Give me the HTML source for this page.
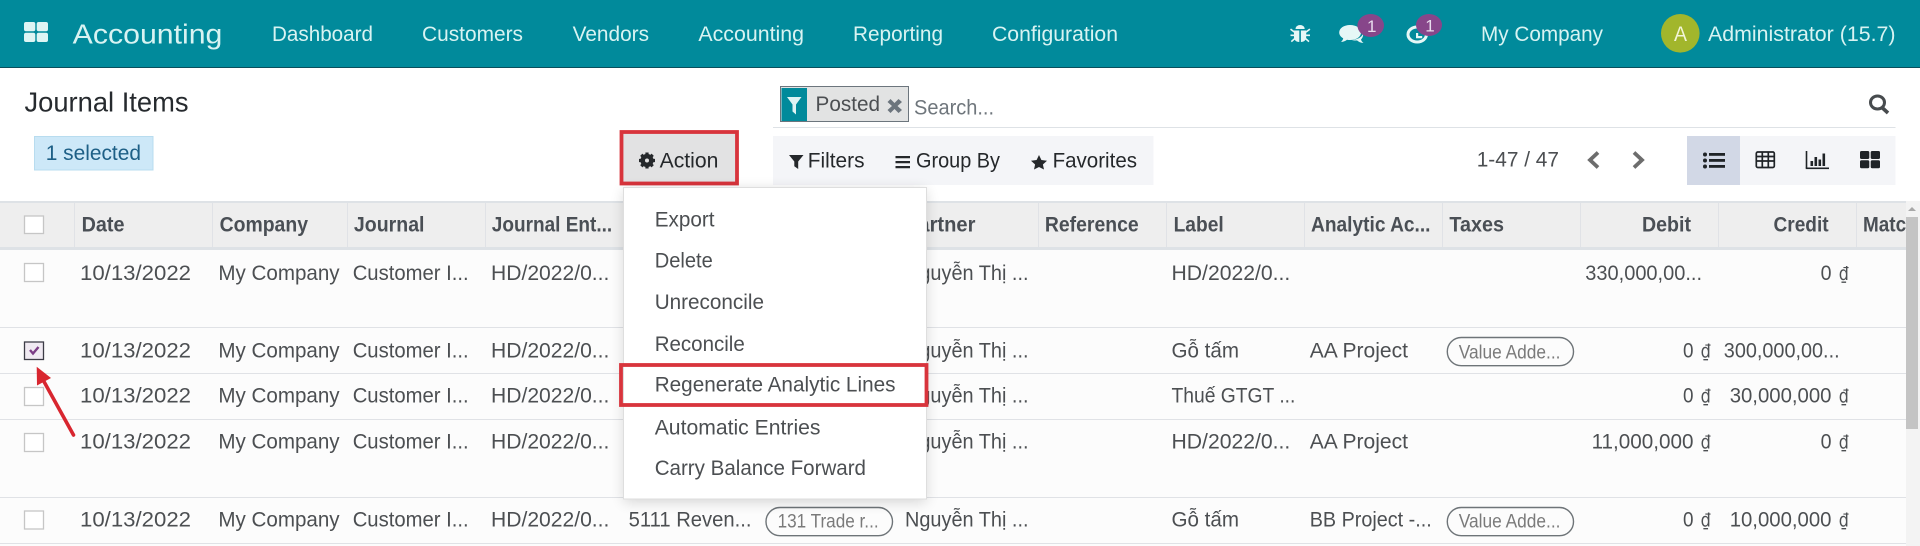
<!DOCTYPE html>
<html lang="en">
<head>
<meta charset="utf-8">
<title>Journal Items</title>
<style>
html,body{margin:0;padding:0;width:1920px;height:546px;overflow:hidden;background:#fff}
svg{display:block}
text{font-family:"Liberation Sans","Noto Sans CJK SC",sans-serif;white-space:pre}
.nav{font-size:21.5px;fill:#d8f3f2}
.hd{font-size:21.5px;font-weight:700;fill:#4a4f55}
.td{font-size:21.5px;fill:#4c4f52}
.bt{font-size:21.5px;fill:#25282b}
.mi{font-size:21.5px;fill:#4c4f52}
.pill{font-size:19.5px;fill:#7a7a7a}
.cb{fill:#fff;stroke:#c6c6c6;stroke-width:1.3}
.sep{fill:#e0e2e6}
text.cur{font-family:"DejaVu Sans",sans-serif;font-size:19px;fill:#4c4f52}
.pl{fill:none;stroke:#6e7478;stroke-width:1.4}
</style>
</head>
<body>
<svg xmlns="http://www.w3.org/2000/svg" width="1920" height="546" viewBox="0 0 1920 546">
<defs>
<filter id="sh" x="-10%" y="-10%" width="120%" height="120%"><feGaussianBlur stdDeviation="7"/></filter>
<clipPath id="tb"><rect x="0" y="201" width="1906" height="345"/></clipPath>
</defs>

<!-- navbar -->
<rect x="0" y="0" width="1920" height="67" fill="#018a9b"/>
<rect x="0" y="67" width="1920" height="1" fill="#0a4f5c"/>
<g fill="#def5f4">
<rect x="24" y="22" width="11.300" height="9.300" rx="2"/><rect x="36.700" y="22" width="11.300" height="9.300" rx="2"/>
<rect x="24" y="32.700" width="11.300" height="9.300" rx="2"/><rect x="36.700" y="32.700" width="11.300" height="9.300" rx="2"/>
</g>
<text x="72.7" y="43.3" font-size="28" fill="#d8f3f2" textLength="149.7" lengthAdjust="spacingAndGlyphs">Accounting</text>
<text class="nav" x="272" y="41" textLength="101" lengthAdjust="spacingAndGlyphs">Dashboard</text>
<text class="nav" x="422" y="41" textLength="101" lengthAdjust="spacingAndGlyphs">Customers</text>
<text class="nav" x="572.6" y="41" textLength="76.4" lengthAdjust="spacingAndGlyphs">Vendors</text>
<text class="nav" x="698.4" y="41" textLength="105.6" lengthAdjust="spacingAndGlyphs">Accounting</text>
<text class="nav" x="853" y="41" textLength="90" lengthAdjust="spacingAndGlyphs">Reporting</text>
<text class="nav" x="992" y="41" textLength="126" lengthAdjust="spacingAndGlyphs">Configuration</text>

<!-- bug -->
<g fill="#e6f7f6">
<path d="M1295.5 29a4.6 4 0 0 1 9.2 0z"/>
<path d="M1294 30.5h5.3V42c-3.2 0-5.3-2-5.3-5zM1300.9 30.5h5.3V37c0 3-2.100 5-5.300 5z"/>
<path d="M1291 28.500l4 3-1 1.200-4-3zM1309.400 28.500l-4 3 1 1.200 4-3zM1290.500 34.500h5v1.600h-5zM1305 34.500h5v1.600h-5zM1290.800 41l4-3.500 1 1.200-4 3.500zM1309.500 41l-4-3.500-1 1.200 4 3.500z"/>
</g>
<!-- chat -->
<path d="M1350 25c6.500 0 11 3.300 11 7.500s-4.500 7.500-11 7.500c-1 0-2 0-3-.3-1.500 1.300-3.500 2-6 2.300 1.200-1 2-2.300 2.200-3.700-2.500-1.400-4-3.500-4-5.800 0-4.200 4.700-7.500 10.800-7.500z" fill="#e6f7f6"/>
<path d="M1363 33.500c.700 3-1.500 5.500-2 6 .300 1.200 1 2.200 2.500 3.500-2.500-.2-5-1-6.500-2.600-1.200.2-3.500.2-5-.4 5-.5 10-2.500 11-6.500z" fill="#e6f7f6"/>
<ellipse cx="1370.700" cy="25.500" rx="13.300" ry="11.500" fill="#87468a"/>
<text x="1367" y="32" font-size="17" fill="#e8dced">1</text>
<!-- activity clock -->
<ellipse cx="1417.200" cy="34.500" rx="9.200" ry="7.500" fill="none" stroke="#e6f7f6" stroke-width="3"/>
<path d="M1416 33h2.200v3h4v2.200h-6.200z" fill="#e6f7f6"/>
<ellipse cx="1429" cy="25" rx="13" ry="11" fill="#87468a"/>
<text x="1425.300" y="31.500" font-size="17" fill="#e8dced">1</text>

<text class="nav" x="1481" y="41" textLength="122" lengthAdjust="spacingAndGlyphs">My Company</text>
<ellipse cx="1680.300" cy="33.300" rx="19.300" ry="19.300" fill="#a2b62c"/>
<text x="1674" y="41" font-size="21.500" fill="#f3f5d8" textLength="13" lengthAdjust="spacingAndGlyphs">A</text>
<text class="nav" x="1708" y="41" textLength="187.500" lengthAdjust="spacingAndGlyphs">Administrator (15.7)</text>

<!-- control panel -->
<text x="24.500" y="111.700" font-size="28" fill="#262a2e" textLength="164" lengthAdjust="spacingAndGlyphs">Journal Items</text>
<rect x="34.500" y="136.500" width="118.500" height="33.500" fill="#cde8f8" stroke="#b8dcef"/>
<text x="45.700" y="160" font-size="21" fill="#1d5f86" textLength="95.300" lengthAdjust="spacingAndGlyphs">1 selected</text>

<!-- search -->
<rect x="773" y="127" width="1122.500" height="1" fill="#dee2e6"/>
<rect x="780.500" y="86.500" width="128" height="35" fill="#e2e3e3" stroke="#6c757d"/>
<rect x="781.500" y="88" width="25.500" height="33" fill="#018a9b"/>
<path d="M787 97h14.500l-5.500 7.500v10l-3.500-3v-7z" fill="#dff3f4"/>
<text x="815.500" y="111" font-size="21.500" fill="#4c4f52" textLength="64.500" lengthAdjust="spacingAndGlyphs">Posted</text>
<path d="M887.500 102l3-3 4 4 4-4 3.500 3-4.500 4 4.500 4-3.500 3-4-4-4 4-3-3 4.500-4z" fill="#6c757d"/>
<text x="914" y="114.300" font-size="21.500" fill="#6f767c" textLength="80" lengthAdjust="spacingAndGlyphs">Search...</text>
<ellipse cx="1877.500" cy="102.500" rx="7" ry="6.500" fill="none" stroke="#474b4e" stroke-width="3"/>
<path d="M1882 107.500l6 5.500" stroke="#474b4e" stroke-width="3.600" fill="none"/>

<!-- filter bar -->
<rect x="773" y="136" width="380.500" height="49" fill="#f4f5f8"/>
<path d="M789 155h14.500l-5.300 6.500v7.500l-3.900-2.800v-4.700z" fill="#25282b"/>
<text class="bt" x="807.800" y="167.700" textLength="56.700" lengthAdjust="spacingAndGlyphs">Filters</text>
<path d="M895.500 156h14.500v2.300h-14.500zM895.500 161h14.500v2.300h-14.500zM895.500 166h14.500v2.300h-14.500z" fill="#25282b"/>
<text class="bt" x="916" y="167.700" textLength="84" lengthAdjust="spacingAndGlyphs">Group By</text>
<path d="M1039 155l2.400 5 5.600.7-4.100 3.800 1.100 5-5-2.500-5 2.500 1.100-5-4.100-3.800 5.600-.7z" fill="#25282b"/>
<text class="bt" x="1052.600" y="167.700" textLength="84.400" lengthAdjust="spacingAndGlyphs">Favorites</text>

<!-- pager -->
<text x="1476.700" y="166.700" font-size="21.500" fill="#4c4f52" textLength="82.300" lengthAdjust="spacingAndGlyphs">1-47 / 47</text>
<path d="M1598 152.500l-8 7.500 8 7.500" fill="none" stroke="#6d6d6d" stroke-width="3.800"/>
<path d="M1634 152.500l8 7.500-8 7.500" fill="none" stroke="#6d6d6d" stroke-width="3.800"/>

<!-- view switcher -->
<rect x="1687" y="136" width="208.500" height="49" fill="#f4f5f8"/>
<rect x="1687" y="136" width="53" height="49" fill="#d2d8e6"/>
<g fill="#1f2327">
<circle cx="1705" cy="154.500" r="2"/><circle cx="1705" cy="160.500" r="2"/><circle cx="1705" cy="166.500" r="2"/>
<rect x="1709" y="153" width="16" height="2.800"/><rect x="1709" y="159" width="16" height="2.800"/><rect x="1709" y="165" width="16" height="2.800"/>
</g>
<g fill="none" stroke="#1f2327" stroke-width="1.700">
<rect x="1756.300" y="152" width="18" height="15.500" rx="1.500"/>
<path d="M1756.300 156.500h18M1756.300 161h18M1762.300 152v15.500M1768.300 152v15.500"/>
</g>
<g fill="#1f2327">
<rect x="1805.700" y="151" width="1.600" height="17"/><rect x="1805.700" y="167.500" width="23.300" height="1.600"/>
<rect x="1810.500" y="161" width="2.600" height="5"/><rect x="1814.500" y="157" width="2.600" height="9"/><rect x="1818.500" y="159.500" width="2.600" height="6.500"/><rect x="1822.500" y="153.500" width="2.600" height="12.500"/>
<rect x="1860" y="151" width="9.300" height="8" rx="1.500"/><rect x="1870.700" y="151" width="9.300" height="8" rx="1.500"/>
<rect x="1860" y="160.300" width="9.300" height="8" rx="1.500"/><rect x="1870.700" y="160.300" width="9.300" height="8" rx="1.500"/>
</g>

<!-- table -->
<g clip-path="url(#tb)">
<rect x="0" y="250" width="1906" height="296" fill="#fcfcfc"/>
<rect x="0" y="201" width="1906" height="2" fill="#dee2e6"/>
<rect x="0" y="203" width="1906" height="44" fill="#eeeeee"/>
<rect x="0" y="247" width="1906" height="3" fill="#dee2e6"/>
<g class="sep">
<rect x="74" y="203" width="1" height="44"/><rect x="212" y="203" width="1" height="44"/><rect x="347" y="203" width="1" height="44"/><rect x="485" y="203" width="1" height="44"/><rect x="1038" y="203" width="1" height="44"/><rect x="1166" y="203" width="1" height="44"/><rect x="1304" y="203" width="1" height="44"/><rect x="1442" y="203" width="1" height="44"/><rect x="1580" y="203" width="1" height="44"/><rect x="1718" y="203" width="1" height="44"/><rect x="1856" y="203" width="1" height="44"/>
<rect x="0" y="327" width="1906" height="1"/><rect x="0" y="373" width="1906" height="1"/><rect x="0" y="419" width="1906" height="1"/><rect x="0" y="497" width="1906" height="1"/><rect x="0" y="543" width="1906" height="1"/>
</g>

<rect class="cb" x="24.500" y="216" width="19" height="17.500"/>
<text class="hd" x="81.600" y="231.700" textLength="42.900" lengthAdjust="spacingAndGlyphs">Date</text>
<text class="hd" x="219.600" y="231.700" textLength="88.400" lengthAdjust="spacingAndGlyphs">Company</text>
<text class="hd" x="353.900" y="231.700" textLength="70.600" lengthAdjust="spacingAndGlyphs">Journal</text>
<text class="hd" x="491.800" y="231.700" textLength="120.400" lengthAdjust="spacingAndGlyphs">Journal Ent...</text>
<text class="hd" x="905" y="231.700" textLength="70.400" lengthAdjust="spacingAndGlyphs">Partner</text>
<text class="hd" x="1044.900" y="231.700" textLength="93.800" lengthAdjust="spacingAndGlyphs">Reference</text>
<text class="hd" x="1173.600" y="231.700" textLength="50.100" lengthAdjust="spacingAndGlyphs">Label</text>
<text class="hd" x="1311" y="231.700" textLength="119.500" lengthAdjust="spacingAndGlyphs">Analytic Ac...</text>
<text class="hd" x="1449.400" y="231.700" textLength="54.600" lengthAdjust="spacingAndGlyphs">Taxes</text>
<text class="hd" x="1642" y="231.700" textLength="49" lengthAdjust="spacingAndGlyphs">Debit</text>
<text class="hd" x="1773.500" y="231.700" textLength="55.100" lengthAdjust="spacingAndGlyphs">Credit</text>
<text class="hd" x="1863" y="231.700" textLength="83" lengthAdjust="spacingAndGlyphs">Matching</text>

<!-- row 1 -->
<rect class="cb" x="24.500" y="263.500" width="19" height="18"/>
<text class="td" x="80" y="280" textLength="111" lengthAdjust="spacingAndGlyphs">10/13/2022</text>
<text class="td" x="218.400" y="280" textLength="121.200" lengthAdjust="spacingAndGlyphs">My Company</text>
<text class="td" x="352.700" y="280" textLength="115.900" lengthAdjust="spacingAndGlyphs">Customer I...</text>
<text class="td" x="491" y="280" textLength="118.400" lengthAdjust="spacingAndGlyphs">HD/2022/0...</text>
<text class="td" x="905" y="280" textLength="123.500" lengthAdjust="spacingAndGlyphs">Nguyễn Thị ...</text>
<text class="td" x="1171.500" y="280" textLength="118.800" lengthAdjust="spacingAndGlyphs">HD/2022/0...</text>
<text class="td" x="1585.300" y="280" textLength="116.700" lengthAdjust="spacingAndGlyphs">330,000,00...</text>
<text class="td" x="1820.600" y="280" textLength="10.900" lengthAdjust="spacingAndGlyphs">0</text>
<text class="cur" x="1838.700" y="280" textLength="10.100" lengthAdjust="spacingAndGlyphs">₫</text>

<!-- row 2 -->
<rect x="24.500" y="342" width="19" height="17.500" fill="#f0eaf2" stroke="#3c3c46" stroke-width="1.300"/>
<path d="M30 350l3 3.500 5.500-6.500" fill="none" stroke="#7c3d86" stroke-width="2.400"/>
<text class="td" x="80" y="357.700" textLength="111" lengthAdjust="spacingAndGlyphs">10/13/2022</text>
<text class="td" x="218.400" y="357.700" textLength="121.200" lengthAdjust="spacingAndGlyphs">My Company</text>
<text class="td" x="352.700" y="357.700" textLength="115.900" lengthAdjust="spacingAndGlyphs">Customer I...</text>
<text class="td" x="491" y="357.700" textLength="118.400" lengthAdjust="spacingAndGlyphs">HD/2022/0...</text>
<text class="td" x="905" y="357.700" textLength="123.500" lengthAdjust="spacingAndGlyphs">Nguyễn Thị ...</text>
<text class="td" x="1171.500" y="357.700" textLength="67.500" lengthAdjust="spacingAndGlyphs">Gỗ tấm</text>
<text class="td" x="1309.700" y="357.700" textLength="98.300" lengthAdjust="spacingAndGlyphs">AA Project</text>
<rect class="pl" x="1447.300" y="337.500" width="126.200" height="28.200" rx="14"/>
<text class="pill" x="1458.700" y="358.500" textLength="101.800" lengthAdjust="spacingAndGlyphs">Value Adde...</text>
<text class="td" x="1683" y="357.700" textLength="10.500" lengthAdjust="spacingAndGlyphs">0</text>
<text class="cur" x="1700.600" y="357.700" textLength="10.200" lengthAdjust="spacingAndGlyphs">₫</text>
<text class="td" x="1723.800" y="357.700" textLength="115.800" lengthAdjust="spacingAndGlyphs">300,000,00...</text>

<!-- row 3 -->
<rect class="cb" x="24.500" y="387.500" width="19" height="18"/>
<text class="td" x="80" y="402.700" textLength="111" lengthAdjust="spacingAndGlyphs">10/13/2022</text>
<text class="td" x="218.400" y="402.700" textLength="121.200" lengthAdjust="spacingAndGlyphs">My Company</text>
<text class="td" x="352.700" y="402.700" textLength="115.900" lengthAdjust="spacingAndGlyphs">Customer I...</text>
<text class="td" x="491" y="402.700" textLength="118.400" lengthAdjust="spacingAndGlyphs">HD/2022/0...</text>
<text class="td" x="905" y="402.700" textLength="123.500" lengthAdjust="spacingAndGlyphs">Nguyễn Thị ...</text>
<text class="td" x="1171.500" y="402.700" textLength="123.900" lengthAdjust="spacingAndGlyphs">Thuế GTGT ...</text>
<text class="td" x="1683" y="402.700" textLength="10.500" lengthAdjust="spacingAndGlyphs">0</text>
<text class="cur" x="1700.600" y="402.700" textLength="10.200" lengthAdjust="spacingAndGlyphs">₫</text>
<text class="td" x="1729.700" y="402.700" textLength="101.800" lengthAdjust="spacingAndGlyphs">30,000,000</text>
<text class="cur" x="1838.700" y="402.700" textLength="10.100" lengthAdjust="spacingAndGlyphs">₫</text>

<!-- row 4 -->
<rect class="cb" x="24.500" y="433.500" width="19" height="18"/>
<text class="td" x="80" y="448.300" textLength="111" lengthAdjust="spacingAndGlyphs">10/13/2022</text>
<text class="td" x="218.400" y="448.300" textLength="121.200" lengthAdjust="spacingAndGlyphs">My Company</text>
<text class="td" x="352.700" y="448.300" textLength="115.900" lengthAdjust="spacingAndGlyphs">Customer I...</text>
<text class="td" x="491" y="448.300" textLength="118.400" lengthAdjust="spacingAndGlyphs">HD/2022/0...</text>
<text class="td" x="905" y="448.300" textLength="123.500" lengthAdjust="spacingAndGlyphs">Nguyễn Thị ...</text>
<text class="td" x="1171.500" y="448.300" textLength="118.800" lengthAdjust="spacingAndGlyphs">HD/2022/0...</text>
<text class="td" x="1309.700" y="448.300" textLength="98.300" lengthAdjust="spacingAndGlyphs">AA Project</text>
<text class="td" x="1591.600" y="448.300" textLength="101.900" lengthAdjust="spacingAndGlyphs">11,000,000</text>
<text class="cur" x="1700.600" y="448.300" textLength="10.200" lengthAdjust="spacingAndGlyphs">₫</text>
<text class="td" x="1820.600" y="448.300" textLength="10.900" lengthAdjust="spacingAndGlyphs">0</text>
<text class="cur" x="1838.700" y="448.300" textLength="10.100" lengthAdjust="spacingAndGlyphs">₫</text>

<!-- row 5 -->
<rect class="cb" x="24.500" y="511" width="19" height="18"/>
<text class="td" x="80" y="526.700" textLength="111" lengthAdjust="spacingAndGlyphs">10/13/2022</text>
<text class="td" x="218.400" y="526.700" textLength="121.200" lengthAdjust="spacingAndGlyphs">My Company</text>
<text class="td" x="352.700" y="526.700" textLength="115.900" lengthAdjust="spacingAndGlyphs">Customer I...</text>
<text class="td" x="491" y="526.700" textLength="118.400" lengthAdjust="spacingAndGlyphs">HD/2022/0...</text>
<text class="td" x="628.600" y="526.700" textLength="122.900" lengthAdjust="spacingAndGlyphs">5111 Reven...</text>
<rect class="pl" x="766" y="507.500" width="126.500" height="28.200" rx="14"/>
<text class="pill" x="777.600" y="527.500" textLength="101" lengthAdjust="spacingAndGlyphs">131 Trade r...</text>
<text class="td" x="905" y="526.700" textLength="123.500" lengthAdjust="spacingAndGlyphs">Nguyễn Thị ...</text>
<text class="td" x="1171.500" y="526.700" textLength="67.500" lengthAdjust="spacingAndGlyphs">Gỗ tấm</text>
<text class="td" x="1309.700" y="526.700" textLength="122" lengthAdjust="spacingAndGlyphs">BB Project -...</text>
<rect class="pl" x="1447.300" y="507.500" width="126.200" height="28.200" rx="14"/>
<text class="pill" x="1458.700" y="527.500" textLength="101.800" lengthAdjust="spacingAndGlyphs">Value Adde...</text>
<text class="td" x="1683" y="526.700" textLength="10.500" lengthAdjust="spacingAndGlyphs">0</text>
<text class="cur" x="1700.600" y="526.700" textLength="10.200" lengthAdjust="spacingAndGlyphs">₫</text>
<text class="td" x="1729.700" y="526.700" textLength="101.800" lengthAdjust="spacingAndGlyphs">10,000,000</text>
<text class="cur" x="1838.700" y="526.700" textLength="10.100" lengthAdjust="spacingAndGlyphs">₫</text>
</g>

<!-- scrollbar -->
<rect x="1906" y="201" width="14" height="345" fill="#f3f3f3"/>
<path d="M1912 207l4 4h-8z" fill="#a8a8a8"/>
<rect x="1906" y="217" width="12" height="212" fill="#c4c4c4"/>

<!-- Action button -->
<rect x="621.500" y="132" width="115.500" height="51.500" fill="#e2e2e3" stroke="#d8343c" stroke-width="3.800"/>
<g transform="translate(647 160.500)">
<circle r="4.300" fill="none" stroke="#25282b" stroke-width="4.600"/>
<g stroke="#25282b" stroke-width="3.200"><path d="M0-8V-5.500M0 8V5.500M-8 0H-5.500M8 0H5.500M-5.700-5.700L-4-4M5.700-5.700L4-4M-5.700 5.700L-4 4M5.700 5.700L4 4"/></g>
</g>
<text class="bt" x="659.600" y="167.700" textLength="58.800" lengthAdjust="spacingAndGlyphs">Action</text>

<!-- dropdown -->
<rect x="624" y="190" width="302" height="312" fill="#000" opacity=".16" filter="url(#sh)"/>
<rect x="623.500" y="187.500" width="303" height="311.500" fill="#fff" stroke="#dedede"/>
<text class="mi" x="654.700" y="226.700" textLength="59.800" lengthAdjust="spacingAndGlyphs">Export</text>
<text class="mi" x="654.700" y="267.700" textLength="58.100" lengthAdjust="spacingAndGlyphs">Delete</text>
<text class="mi" x="654.700" y="309" textLength="109.300" lengthAdjust="spacingAndGlyphs">Unreconcile</text>
<text class="mi" x="654.700" y="351" textLength="90.100" lengthAdjust="spacingAndGlyphs">Reconcile</text>
<text class="mi" x="654.700" y="391.700" textLength="240.800" lengthAdjust="spacingAndGlyphs">Regenerate Analytic Lines</text>
<text class="mi" x="654.700" y="434.300" textLength="165.800" lengthAdjust="spacingAndGlyphs">Automatic Entries</text>
<text class="mi" x="654.700" y="475" textLength="211.300" lengthAdjust="spacingAndGlyphs">Carry Balance Forward</text>
<rect x="621" y="365" width="305.500" height="40" fill="none" stroke="#d8343c" stroke-width="3.800"/>

<!-- red arrow -->
<path d="M73.500 435L42 378" fill="none" stroke="#d8262f" stroke-width="3.600" stroke-linecap="round"/>
<path d="M36.700 366.700L51 378L37 385.500z" fill="#d8262f"/>
</svg>
</body>
</html>
